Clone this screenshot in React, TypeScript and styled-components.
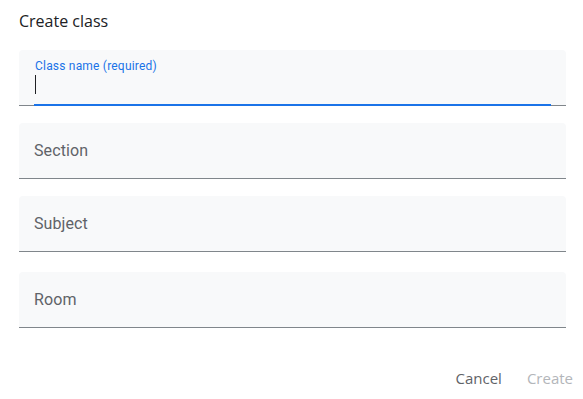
import styled, { createGlobalStyle } from "styled-components";

const GlobalStyle = createGlobalStyle`
  body {
    margin: 0;
    background: #ffffff;
    font-family: Roboto, "Liberation Sans", sans-serif;
  }
`;

const Dialog = styled.div`
  width: 583px;
  height: 399px;
  box-sizing: border-box;
  padding: 11px 17px 0 19px;
  display: flex;
  flex-direction: column;
`;

const Title = styled.h2`
  margin: 0;
  font-family: "Open Sans", Roboto, sans-serif;
  font-size: 16px;
  font-weight: 500;
  line-height: 20px;
  color: #202124;
`;

const Fields = styled.div`
  margin-top: 19px;
  display: flex;
  flex-direction: column;
  gap: 17px;
`;

const Field = styled.div<{ $focused?: boolean; $extra?: number }>`
  position: relative;
  height: 56px;
  box-sizing: border-box;
  margin-top: ${(p) => p.$extra || 0}px;
  background: #f8f9fa;
  border-radius: 4px 4px 0 0;
  border-bottom: 1px solid #80868b;
  padding: ${(p) => (p.$focused ? "9px 15px 0 16px" : "0 15px 0 15px")};
  display: flex;
  flex-direction: column;
  justify-content: ${(p) => (p.$focused ? "flex-start" : "center")};
  &::after {
    content: "";
    display: ${(p) => (p.$focused ? "block" : "none")};
    position: absolute;
    left: 15px;
    right: 15px;
    bottom: -1px;
    height: 2px;
    background: #1a73e8;
  }
`;

const FloatLabel = styled.span`
  font-size: 12px;
  line-height: 14px;
  color: #1a73e8;
  letter-spacing: 0.2px;
`;

const Caret = styled.span`
  display: block;
  width: 1px;
  height: 19px;
  margin-top: 2px;
  background: #202124;
`;

const Placeholder = styled.span`
  font-size: 16px;
  line-height: 20px;
  color: #5f6368;
  letter-spacing: 0.1px;
  margin-top: 1px;
`;

const Actions = styled.div`
  margin-top: auto;
  margin-bottom: 13px;
  display: flex;
  justify-content: flex-end;
  gap: 25px;
  margin-right: -7px;
`;

const TextButton = styled.button<{ $disabled?: boolean }>`
  border: none;
  background: none;
  padding: 0;
  font-family: "Open Sans", Roboto, sans-serif;
  font-size: 15px;
  font-weight: 500;
  line-height: 16px;
  color: ${(p) => (p.$disabled ? "#b3b6ba" : "#5f6368")};
  cursor: ${(p) => (p.$disabled ? "default" : "pointer")};
`;

export default function App() {
  return (
    <>
      <GlobalStyle />
      <Dialog>
        <Title>Create class</Title>
        <Fields>
          <Field $focused>
            <FloatLabel>Class name (required)</FloatLabel>
            <Caret />
          </Field>
          <Field>
            <Placeholder>Section</Placeholder>
          </Field>
          <Field>
            <Placeholder>Subject</Placeholder>
          </Field>
          <Field $extra={3}>
            <Placeholder>Room</Placeholder>
          </Field>
        </Fields>
        <Actions>
          <TextButton>Cancel</TextButton>
          <TextButton $disabled>Create</TextButton>
        </Actions>
      </Dialog>
    </>
  );
}
